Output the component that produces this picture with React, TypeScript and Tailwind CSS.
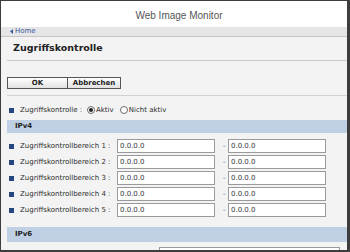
import React from "react";

function Bullet() {
  return <span className="ml-[2px] mr-[6px] inline-block h-[5px] w-[5px] shrink-0 bg-[#26467f]" />;
}

function Radio({ checked }: { checked?: boolean }) {
  return (
    <span className="inline-flex h-[8px] w-[8px] shrink-0 items-center justify-center rounded-full border border-[#6a6a6a] bg-white">
      {checked && <span className="h-[4px] w-[4px] rounded-full bg-[#222]" />}
    </span>
  );
}

function IpInput({ value }: { value: string }) {
  return (
    <div className="flex h-[14px] w-[98px] shrink-0 items-center border border-[#9a9a9a] bg-white pl-[2px] text-[7px] text-[#3a3a3a]">
      {value}
    </div>
  );
}

function RangeRow({ n }: { n: number }) {
  return (
    <div className="flex h-[14px] items-center">
      <Bullet />
      <span className="w-[97px] shrink-0 whitespace-nowrap text-[7px] text-[#2e2e2e]">
        Zugriffskontrollbereich {n} :
      </span>
      <IpInput value="0.0.0.0" />
      <span className="w-[13px] shrink-0 pl-[8px] text-[7px] text-[#555]">-</span>
      <IpInput value="0.0.0.0" />
    </div>
  );
}

export default function App() {
  return (
    <div className="flex h-[252px] w-[350px] flex-col overflow-hidden border-b-2 border-l border-r-[3px] border-t border-[#3d3d3d] bg-[#f3f3f3] font-['DejaVu_Sans',Verdana,sans-serif]">
      {/* title bar */}
      <div className="flex h-[26px] shrink-0 items-center justify-center bg-white pl-[10px] pt-[2px] font-['Liberation_Sans',Arial,sans-serif] text-[10px] text-[#555]">
        Web Image Monitor
      </div>

      {/* breadcrumb */}
      <div className="flex h-[10px] shrink-0 items-center border-b border-[#c6c6c6] bg-[#e6e6e9] pl-[9px] text-[7px] text-[#3d5a98]">
        <svg width="3" height="5" viewBox="0 0 3 5" className="mr-[2px]">
          <path d="M3 0 L0 2.5 L3 5 Z" fill="#3d5a98" />
        </svg>
        Home
      </div>

      <div className="flex flex-col pl-[6px]">
        {/* heading */}
        <div className="flex h-[24px] shrink-0 items-center border-b border-[#c8c8c8] pl-[6px] text-[9.5px] font-bold text-[#222]">
          Zugriffskontrolle
        </div>

        {/* buttons */}
        <div className="mt-[16px] flex h-[12px]">
          <button className="flex h-[12px] w-[61px] items-center justify-center border border-[#555] bg-gradient-to-b from-white to-[#e2e2e2] text-[7px] font-bold text-[#222]">
            OK
          </button>
          <button className="flex h-[12px] w-[53px] items-center justify-center border border-l-0 border-[#555] bg-gradient-to-b from-white to-[#e2e2e2] text-[7px] font-bold text-[#222]">
            Abbrechen
          </button>
        </div>

        <div className="mt-[6px] h-px bg-[#d2d2d2]" />

        {/* radio row */}
        <div className="mt-[7px] flex h-[14px] items-center text-[7px] text-[#2e2e2e]">
          <Bullet />
          <span className="mr-[5px] whitespace-nowrap">Zugriffskontrolle :</span>
          <Radio checked />
          <span className="ml-[1px] mr-[6px]">Aktiv</span>
          <Radio />
          <span className="ml-[1px] whitespace-nowrap">Nicht aktiv</span>
        </div>

        {/* IPv4 */}
        <div className="mt-[3px] flex h-[13px] items-center bg-[#bfcfe4] pl-[8px] text-[7px] font-bold text-[#222]">
          IPv4
        </div>

        <div className="mt-[6px] flex flex-col gap-[2px]">
          {[1, 2, 3, 4, 5].map((n) => (
            <RangeRow key={n} n={n} />
          ))}
        </div>

        {/* IPv6 */}
        <div className="mt-[10px] flex h-[15px] items-center bg-[#bfcfe4] pl-[8px] text-[7px] font-bold text-[#222]">
          IPv6
        </div>

        <div className="mt-[4px] flex h-[14px] items-start">
          <span className="ml-[114px]">
            <Radio />
          </span>
          <div className="ml-[30px] mt-[1px] h-[14px] w-[181px] shrink-0 border border-[#9a9a9a] bg-white" />
        </div>
      </div>
    </div>
  );
}
